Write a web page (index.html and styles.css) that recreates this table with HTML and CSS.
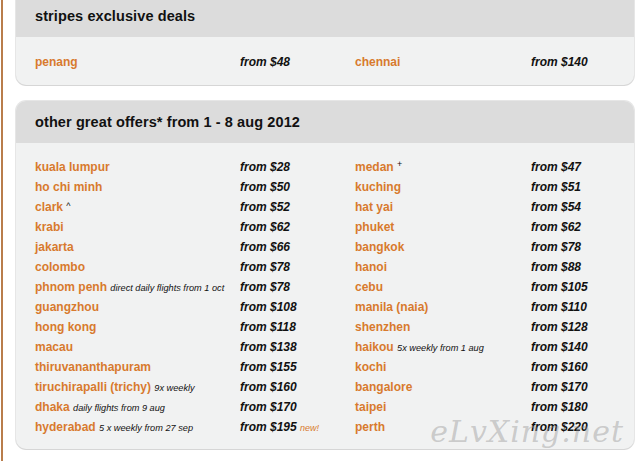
FILE: index.html
```html
<!DOCTYPE html>
<html>
<head>
<meta charset="utf-8">
<link rel="stylesheet" href="styles.css">
</head>
<body>
<div class="page">
  <div class="rule"></div>
  <div class="content">
    <section class="panel panel-first">
      <h2 class="head">stripes exclusive deals</h2>
      <div class="body">
        <div class="grid">
          <span class="city">penang</span><span class="price">from $48</span>
          <span class="city">chennai</span><span class="price">from $140</span>
        </div>
      </div>
    </section>
    <section class="panel panel-second">
      <h2 class="head tall">other great offers* from 1 - 8 aug 2012</h2>
      <div class="body">
        <div class="grid">
          <span class="city">kuala lumpur</span><span class="price">from $28</span>
          <span class="city">medan <sup class="mark">+</sup></span><span class="price">from $47</span>

          <span class="city">ho chi minh</span><span class="price">from $50</span>
          <span class="city">kuching</span><span class="price">from $51</span>

          <span class="city">clark <sup class="mark caret">^</sup></span><span class="price">from $52</span>
          <span class="city">hat yai</span><span class="price">from $54</span>

          <span class="city">krabi</span><span class="price">from $62</span>
          <span class="city">phuket</span><span class="price">from $62</span>

          <span class="city">jakarta</span><span class="price">from $66</span>
          <span class="city">bangkok</span><span class="price">from $78</span>

          <span class="city">colombo</span><span class="price">from $78</span>
          <span class="city">hanoi</span><span class="price">from $88</span>

          <span class="city">phnom penh <em class="note">direct daily flights from 1 oct</em></span><span class="price">from $78</span>
          <span class="city">cebu</span><span class="price">from $105</span>

          <span class="city">guangzhou</span><span class="price">from $108</span>
          <span class="city">manila (naia)</span><span class="price">from $110</span>

          <span class="city">hong kong</span><span class="price">from $118</span>
          <span class="city">shenzhen</span><span class="price">from $128</span>

          <span class="city">macau</span><span class="price">from $138</span>
          <span class="city">haikou <em class="note">5x weekly from 1 aug</em></span><span class="price">from $140</span>

          <span class="city">thiruvananthapuram</span><span class="price">from $155</span>
          <span class="city">kochi</span><span class="price">from $160</span>

          <span class="city">tiruchirapalli (trichy) <em class="note">9x weekly</em></span><span class="price">from $160</span>
          <span class="city">bangalore</span><span class="price">from $170</span>

          <span class="city">dhaka <em class="note">daily flights from 9 aug</em></span><span class="price">from $170</span>
          <span class="city">taipei</span><span class="price">from $180</span>

          <span class="city">hyderabad <em class="note">5 x weekly from 27 sep</em></span><span class="price">from $195 <em class="new">new!</em></span>
          <span class="city">perth</span><span class="price">from $220</span>
        </div>
      </div>
      <div class="watermark">eLvXing.net</div>
    </section>
  </div>
</div>
</body>
</html>
```
FILE: styles.css
```css
html, body {
  margin: 0;
  padding: 0;
  background: #ffffff;
}
body {
  font-family: "Liberation Sans", Arial, sans-serif;
  width: 635px;
  height: 461px;
  overflow: hidden;
}
.page {
  display: flex;
  height: 461px;
}
.rule {
  width: 2px;
  margin-left: 1px;
  background: #b97d4b;
  flex: none;
}
.content {
  margin-left: 13px;
  width: 618px;
  display: flex;
  flex-direction: column;
}
.panel {
  position: relative;
  border-radius: 10px;
  background: #f1f2f2;
  box-shadow: 0 1px 0 #d6d6d6, 0 0 0 1px #e6e6e6;
  overflow: hidden;
}
.panel-first {
  border-top-left-radius: 0;
  border-top-right-radius: 0;
}
.panel-second {
  margin-top: 16px;
}
.head {
  margin: 0;
  background: #dcdcdc;
  height: 37px;
  padding: 0 0 0 19px;
  font-size: 14.5px;
  font-weight: bold;
  letter-spacing: 0.1px;
  line-height: 33px;
  color: #111111;
}
.head.tall {
  height: 42px;
  line-height: 42px;
}
.body {
  padding: 15px 0 13px 19px;
}
.panel-second .body {
  padding: 14px 0 12px 19px;
}
.grid {
  display: grid;
  grid-template-columns: 205px 115px 176px 1fr;
  grid-auto-rows: 20px;
  align-items: center;
}
.city {
  color: #d87a2e;
  font-size: 12px;
  font-weight: bold;
  white-space: nowrap;
}
.price {
  color: #111111;
  font-size: 12px;
  font-weight: bold;
  font-style: italic;
  white-space: nowrap;
}
.note {
  color: #111111;
  font-size: 9.2px;
  font-weight: normal;
  font-style: italic;
}
.new {
  color: #d87a2e;
  font-size: 9px;
  font-weight: normal;
  font-style: italic;
}
.mark {
  color: #111111;
  font-size: 9px;
  font-weight: normal;
  vertical-align: 4px;
  line-height: 0;
}
.mark.caret {
  vertical-align: 2px;
}
.watermark {
  position: absolute;
  right: 10px;
  bottom: 0px;
  font-family: "DejaVu Serif", serif;
  font-style: italic;
  font-size: 30px;
  letter-spacing: 1px;
  color: rgba(140, 140, 140, 0.4);
  pointer-events: none;
}
```
